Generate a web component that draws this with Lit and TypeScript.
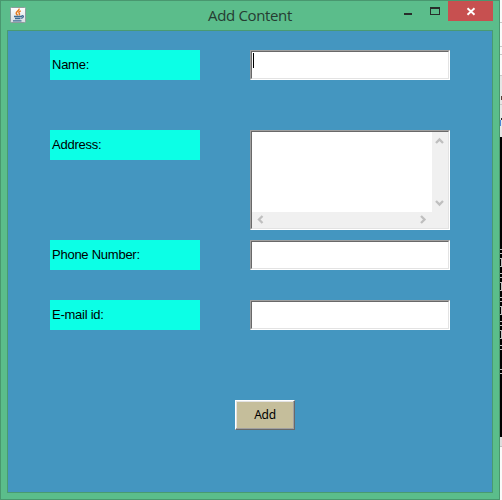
import { LitElement, html, css, svg } from "lit";
import { customElement } from "lit/decorators.js";

const edgeMarks = [
  [22, 1], [46, 1], [54, 1], [75, 1], [104, 1],
];
const consoleRows = [249, 273, 297, 321, 345, 369];

@customElement("app-root")
export class AppRoot extends LitElement {
  static styles = css`
    :host {
      display: flex;
      width: 502px;
      height: 500px;
      overflow: hidden;
      font-family: "Liberation Sans", Arial, sans-serif;
      font-size: 13px;
      color: #000;
    }
    * { box-sizing: border-box; }
    .window {
      width: 500px;
      height: 500px;
      flex: none;
      background: #5bbd8b;
      border: 1px solid #49976f;
      padding: 0 6px 6px;
      display: flex;
      flex-direction: column;
    }
    .titlebar {
      height: 29px;
      flex: none;
      display: grid;
      grid-template-columns: 90px 1fr 90px;
    }
    .app-icon { display: block; margin: 6px 0 0 3px; }
    .title {
      margin: 0;
      text-align: center;
      font: 400 15px/29px "Open Sans", "Noto Sans", sans-serif;
      letter-spacing: -0.35px;
      color: #263c32;
    }
    .controls { display: flex; justify-content: flex-end; align-items: flex-start; }
    .controls svg { display: block; flex: none; }
    .client {
      flex: 1;
      background: #4496c0;
      border: 1px solid #499a72;
      padding: 19px 42px 0;
    }
    .row {
      display: grid;
      grid-template-columns: 150px 200px;
      column-gap: 50px;
      align-items: start;
    }
    .name { margin-bottom: 50px; }
    .address { margin-bottom: 10px; }
    .phone { margin-bottom: 30px; }
    .email { margin-bottom: 70px; }
    .label {
      height: 30px;
      line-height: 30px;
      padding-left: 2px;
      background: #0cffe6;
      letter-spacing: -0.25px;
      white-space: nowrap;
    }
    .field {
      height: 30px;
      background: #fff;
      border: 1px solid;
      border-color: #a0a0a0 #fff #fff #a0a0a0;
    }
    .inner {
      height: 100%;
      border: 1px solid;
      border-color: #696969 #e3e3e3 #e3e3e3 #696969;
    }
    .caret { width: 1px; height: 15px; margin: 1px 0 0 1px; background: #000; }
    .area { height: 100px; }
    .scroll { display: grid; grid-template: 1fr 16px / 1fr 16px; }
    .bar { background: #f0f0f0; display: flex; justify-content: space-between; }
    .vertical { flex-direction: column; }
    .bar svg { display: block; }
    .add {
      display: block;
      width: 60px;
      height: 30px;
      margin-left: 185px;
      padding: 0;
      background: #c5be9b;
      border: 1px solid;
      border-color: #fff #696969 #696969 #fff;
      box-shadow: inset -1px -1px #a0a0a0, inset 1px 1px #e3e3e3;
      font: 12px/26px "Noto Sans", sans-serif;
      letter-spacing: -0.3px;
      color: #000;
      text-align: center;
    }
    .behind { display: block; flex: none; }
  `;

  private arrow(points: string) {
    return html`<svg width="16" height="16" viewBox="0 0 16 16">
      <polyline points=${points} fill="none" stroke="#bfbfbf" stroke-width="2.3"></polyline>
    </svg>`;
  }

  render() {
    return html`
      <main class="window">
        <header class="titlebar">
          <svg class="app-icon" width="16" height="17" viewBox="0 0 16 17">
            <defs><linearGradient id="paper" x2="0" y2="1">
              <stop stop-color="#fff"></stop><stop offset="1" stop-color="#d5dde2"></stop>
            </linearGradient></defs>
            <rect x=".5" y=".5" width="15" height="15" rx="1" fill="url(#paper)" stroke="#8f9c9e"></rect>
            <path d="M9 1.500c1 2-3.200 3-2.800 4.800.1.800 1.200 1.400 1.400 2.200M10.800 3.800c-2.200 1-2.500 1.800-1.400 2.700.5.600 0 1.200-.5 1.800" fill="none" stroke="#e67a1e" stroke-width="1.400"></path>
            <path d="M4 9.500h8M5 11.500h5.500M11.500 9c2.600-1 2.600 1.600-.3 2.500M3 13.800h8.500" fill="none" stroke="#3f6c93" stroke-width="1.300"></path>
          </svg>
          <h1 class="title">Add Content</h1>
          <div class="controls">
            <svg width="90" height="20" viewBox="403 1 90 20" shape-rendering="crispEdges">
              <path fill="#282d2a" d="M404 13h8v2h-8z"></path>
              <path fill="#282d2a" fill-rule="evenodd" d="M430 7h10v8h-10zM431 9v5h8v-5z"></path>
              <path fill="#c75050" d="M448 1h45v20h-45z"></path>
              <path d="M467.500 8.300l7 6.500M474.500 8.300l-7 6.500" stroke="#fff" stroke-width="1.900" shape-rendering="auto"></path>
            </svg>
          </div>
        </header>
        <section class="client">
          <div class="row name">
            <div class="label">Name:</div>
            <div class="field"><div class="inner"><div class="caret"></div></div></div>
          </div>
          <div class="row address">
            <div class="label">Address:</div>
            <div class="field area">
              <div class="inner scroll">
                <div></div>
                <div class="bar vertical">${this.arrow("4,11 7.5,7.5 11,11")}${this.arrow("4,5 7.5,8.5 11,5")}</div>
                <div class="bar">${this.arrow("10.500,4 7,7.500 10.500,11")}${this.arrow("5,4 8.500,7.500 5,11")}</div>
                <div class="bar"></div>
              </div>
            </div>
          </div>
          <div class="row phone">
            <div class="label">Phone Number:</div>
            <div class="field"><div class="inner"></div></div>
          </div>
          <div class="row email">
            <div class="label">E-mail id:</div>
            <div class="field"><div class="inner"></div></div>
          </div>
          <button class="add">Add</button>
        </section>
      </main>
      <svg class="behind" width="2" height="500" viewBox="0 0 2 500" shape-rendering="crispEdges">
        <rect width="2" height="500" fill="#fafafa"></rect>
        <rect y="76" width="2" height="61" fill="#e6e6e6"></rect>
        ${edgeMarks.map(([y, h]) => svg`<rect y=${y} width="2" height=${h} fill="#c8c8c8"></rect>`)}
        <rect x="1" y="96" width="1" height="4" fill="#5a4038"></rect>
        <rect x="1" y="118" width="1" height="2" fill="#222"></rect>
        <rect x="0" y="120" width="1" height="6" fill="#4a86d8"></rect>
        <rect y="137" width="2" height="300" fill="#000"></rect>
        ${consoleRows.map((y) => svg`<path d="M0 ${y}h2v1h-2zM0 ${y + 4}h2v1h-2z" fill="#c0c0c0"></path>`)}
        ${[258, 282, 306, 330].map((y) => svg`<path d="M0 ${y}h2v9h-2v-1h1v-7h-1z" fill="#c0c0c0"></path>`)}
        <rect y="437" width="2" height="9" fill="#dedede"></rect>
        <rect y="446" width="2" height="1" fill="#c0c0c0"></rect>
      </svg>
    `;
  }
}
